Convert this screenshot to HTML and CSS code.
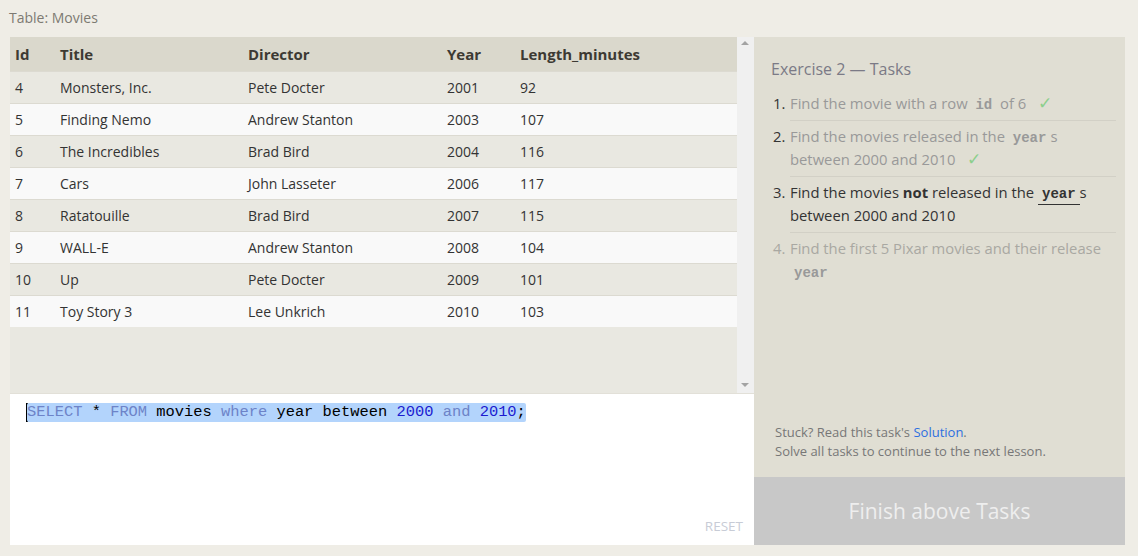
FILE: index.html
```html
<!DOCTYPE html>
<html>
<head>
<meta charset="utf-8">
<link rel="stylesheet" href="styles.css">
</head>
<body>
<div class="page">
  <div class="caption">Table: Movies</div>
  <div class="main">
    <div class="left">
      <div class="table-wrap">
        <div class="table-scroll">
          <table class="grid">
            <thead>
              <tr><th class="c-id">Id</th><th class="c-title">Title</th><th class="c-dir">Director</th><th class="c-year">Year</th><th>Length_minutes</th></tr>
            </thead>
            <tbody>
              <tr><td>4</td><td>Monsters, Inc.</td><td>Pete Docter</td><td>2001</td><td>92</td></tr>
              <tr><td>5</td><td>Finding Nemo</td><td>Andrew Stanton</td><td>2003</td><td>107</td></tr>
              <tr><td>6</td><td>The Incredibles</td><td>Brad Bird</td><td>2004</td><td>116</td></tr>
              <tr><td>7</td><td>Cars</td><td>John Lasseter</td><td>2006</td><td>117</td></tr>
              <tr><td>8</td><td>Ratatouille</td><td>Brad Bird</td><td>2007</td><td>115</td></tr>
              <tr><td>9</td><td>WALL-E</td><td>Andrew Stanton</td><td>2008</td><td>104</td></tr>
              <tr><td>10</td><td>Up</td><td>Pete Docter</td><td>2009</td><td>101</td></tr>
              <tr><td>11</td><td>Toy Story 3</td><td>Lee Unkrich</td><td>2010</td><td>103</td></tr>
            </tbody>
          </table>
        </div>
        <div class="scrollbar">
          <span class="arrow up"></span>
          <span class="arrow down"></span>
        </div>
      </div>
      <div class="editor">
        <div class="code"><span class="cursor"></span><span class="sel"><span class="kw">SELECT</span> * <span class="kw">FROM</span> movies <span class="kw">where</span> year between <span class="num">2000</span> <span class="kw">and</span> <span class="num">2010</span>;</span></div>
        <div class="reset">RESET</div>
      </div>
    </div>
    <div class="right">
      <div class="tasks">
        <div class="tasks-title">Exercise 2 — Tasks</div>
        <ol class="task-list">
          <li class="done"><span class="num-l">1.</span><div class="txt">Find the movie with a row <code>id</code> of 6 <span class="check">✓</span></div></li>
          <li class="done"><span class="num-l">2.</span><div class="txt">Find the movies released in the <code>year</code>s between 2000 and 2010 <span class="check">✓</span></div></li>
          <li class="current"><span class="num-l">3.</span><div class="txt">Find the movies <b>not</b> released in the <code class="ul">year</code>s between 2000 and 2010</div></li>
          <li class="todo"><span class="num-l">4.</span><div class="txt">Find the first 5 Pixar movies and their release <code>year</code></div></li>
        </ol>
        <div class="help">
          <div>Stuck? Read this task's <a class="link">Solution</a>.</div>
          <div>Solve all tasks to continue to the next lesson.</div>
        </div>
      </div>
      <div class="finish">Finish above Tasks</div>
    </div>
  </div>
</div>
</body>
</html>
```

FILE: styles.css
```css
html, body {
  margin: 0;
  padding: 0;
}
body {
  background: #efede6;
  font-family: "Open Sans", "Noto Sans", sans-serif;
  color: #333;
}
.page {
  width: 1138px;
  height: 556px;
  padding: 0 13px 0 10px;
  box-sizing: border-box;
}
.caption {
  height: 37px;
  line-height: 35px;
  font-size: 14px;
  color: #7d7a72;
  margin-left: -1px;
}
.main {
  display: flex;
  height: 508px;
}
.left {
  width: 744px;
  display: flex;
  flex-direction: column;
}
.table-wrap {
  height: 356px;
  display: flex;
  background: #e9e8e1;
  border-bottom: 1px solid #e2e0d8;
}
.table-scroll {
  flex: 1;
}
.grid {
  width: 100%;
  border-collapse: collapse;
  font-size: 14px;
}
.grid th {
  background: #dad8cc;
  text-align: left;
  font-weight: 700;
  font-size: 15px;
  height: 34px;
  padding: 0 0 0 5px;
  color: #3d3a33;
}
.grid td {
  height: 31px;
  padding: 0 0 0 5px;
  border-top: 1px solid #dcdad1;
  color: #333;
}
.grid tbody tr:nth-child(odd) td {
  background: #e9e8e1;
}
.grid tbody tr:nth-child(even) td {
  background: #f9f9f9;
}
.c-id { width: 40px; }
.c-title { width: 183px; }
.c-dir { width: 194px; }
.c-year { width: 68px; }
.scrollbar {
  width: 17px;
  background: #f0f0f0;
  position: relative;
}
.arrow {
  position: absolute;
  left: 4px;
  width: 0;
  height: 0;
  border-left: 4px solid transparent;
  border-right: 4px solid transparent;
}
.arrow.up {
  top: 4px;
  border-bottom: 4px solid #a3a3a3;
}
.arrow.down {
  bottom: 6px;
  border-top: 4px solid #a3a3a3;
}
.editor {
  flex: 1;
  background: #fff;
  position: relative;
}
.code {
  font-family: "Liberation Mono", "DejaVu Sans Mono", monospace;
  font-size: 15.4px;
  padding: 9px 0 0 16px;
  line-height: 19px;
  color: #000;
  display: flex;
  align-items: center;
}
.cursor {
  display: inline-block;
  width: 2px;
  height: 19px;
  background: #000;
  margin-right: -1px;
}
.sel {
  background: #b3d4fc;
  border-radius: 2px;
  white-space: pre;
}
.kw { color: #6d83c8; }
.num { color: #1b1bd0; }
.reset {
  position: absolute;
  right: 11px;
  bottom: 10px;
  font-size: 13.5px;
  color: #c8ccd6;
}
.right {
  width: 371px;
  display: flex;
  flex-direction: column;
}
.tasks {
  flex: 1;
  background: #e0ded3;
  padding: 21px 9px 0 17px;
  display: flex;
  flex-direction: column;
}
.tasks-title {
  font-size: 16px;
  color: #7b7a86;
  margin-bottom: 12px;
}
.task-list {
  list-style: none;
  margin: 0;
  padding: 0;
  font-size: 14.8px;
  line-height: 23px;
}
.task-list li {
  display: flex;
}
.num-l {
  width: 17px;
  flex: none;
  padding-left: 2px;
  color: #333;
}
.txt {
  flex: 1;
  border-bottom: 1px solid #d2d0c6;
  padding: 0 0 5px 0;
  margin-bottom: 4px;
}
.task-list li:last-child .txt {
  border-bottom: none;
}
.done .txt { color: #999; }
.todo .num-l, .todo .txt { color: #a9a8a2; }
.current .txt { color: #333; }
code {
  font-family: "Liberation Mono", "DejaVu Sans Mono", monospace;
  font-weight: 700;
  font-size: 14px;
  line-height: 14px;
  padding: 0 4px;
}
.done code, .todo code { color: #999; }
code.ul {
  border-bottom: 1px solid #333;
  padding-bottom: 2px;
}
.check {
  color: #8ccf8c;
  font-size: 17px;
  line-height: 14px;
  margin-left: 8px;
}
.help {
  margin-top: auto;
  font-size: 13px;
  line-height: 19px;
  color: #777;
  padding: 0 0 16px 4px;
}
.link { color: #2d6fe0; }
.finish {
  height: 68px;
  background: #c8c8c8;
  color: #eeeeee;
  font-size: 21px;
  display: flex;
  align-items: center;
  justify-content: center;
  padding-left: 0;
}
```
